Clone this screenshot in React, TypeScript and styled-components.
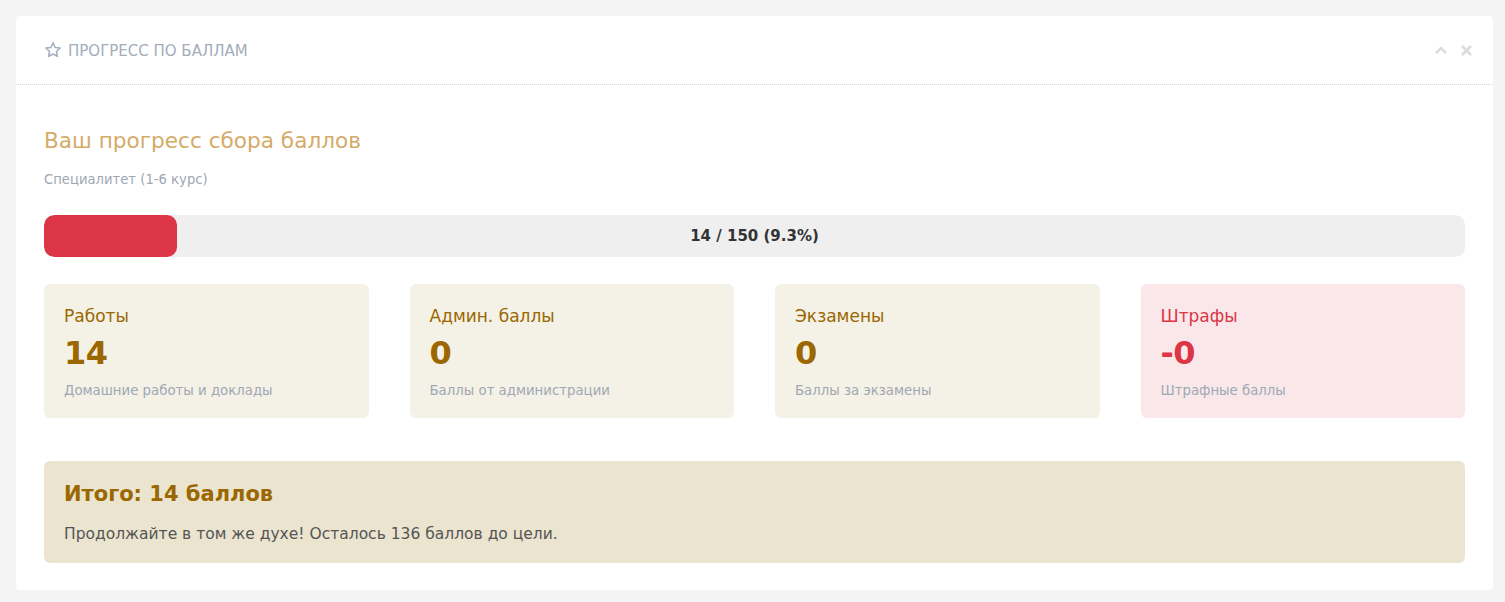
import React from 'react';
import styled, { createGlobalStyle } from 'styled-components';

const GlobalStyle = createGlobalStyle`
  html, body {
    margin: 0;
    padding: 0;
    background: #f4f4f4;
    font-family: "DejaVu Sans", Verdana, sans-serif;
  }
`;

type StatType = {
  title: string
  value: string
  note: string
  danger?: boolean
}

const stats: StatType[] = [
  { title: 'Работы', value: '14', note: 'Домашние работы и доклады' },
  { title: 'Админ. баллы', value: '0', note: 'Баллы от администрации' },
  { title: 'Экзамены', value: '0', note: 'Баллы за экзамены' },
  { title: 'Штрафы', value: '-0', note: 'Штрафные баллы', danger: true },
];

const App: React.FC = () => {
  const current = 14;
  const goal = 150;
  const percent = (current / goal) * 100;
  return (
    <>
      <GlobalStyle />
      <Page>
        <Card>
          <Header>
            <HeaderTitle>
              <svg width="18" height="18" viewBox="0 0 24 24" fill="none" stroke="#a3adbb" strokeWidth="2" strokeLinejoin="round">
                <path d="M12 2.5l2.9 6.1 6.6.8-4.9 4.6 1.3 6.6L12 17.3l-5.9 3.3 1.3-6.6-4.9-4.6 6.6-.8z" />
              </svg>
              <span>ПРОГРЕСС ПО БАЛЛАМ</span>
            </HeaderTitle>
            <Tools>
              <svg width="14" height="14" viewBox="0 0 14 14" fill="none" stroke="#dcdcdc" strokeWidth="2.6">
                <path d="M2 10l5-5 5 5" />
              </svg>
              <svg width="13" height="13" viewBox="0 0 13 13" fill="none" stroke="#dcdcdc" strokeWidth="2.6">
                <path d="M2 2l9 9M11 2l-9 9" />
              </svg>
            </Tools>
          </Header>
          <Body>
            <Heading>Ваш прогресс сбора баллов</Heading>
            <Sub>Специалитет (1-6 курс)</Sub>
            <Bar>
              <Fill style={{ width: `${percent}%` }} />
              <BarLabel>{current} / {goal} ({percent.toFixed(1)}%)</BarLabel>
            </Bar>
            <Grid>
              {stats.map((s) => (
                <Stat key={s.title} $danger={s.danger}>
                  <StatTitle $danger={s.danger}>{s.title}</StatTitle>
                  <StatValue $danger={s.danger}>{s.value}</StatValue>
                  <StatNote>{s.note}</StatNote>
                </Stat>
              ))}
            </Grid>
            <Total>
              <TotalTitle>Итого: {current} баллов</TotalTitle>
              <TotalText>Продолжайте в том же духе! Осталось {goal - current} баллов до цели.</TotalText>
            </Total>
          </Body>
        </Card>
      </Page>
    </>
  );
};

const Page = styled.div`
  padding: 16px 12px 12px 16px;
`;
const Card = styled.div`
  background: #fff;
  border-radius: 4px;
  height: 574px;
  box-sizing: border-box;
`;
const Header = styled.div`
  height: 69px;
  box-sizing: border-box;
  border-bottom: 1px dotted #d6d6d6;
  display: flex;
  align-items: center;
  justify-content: space-between;
  padding: 0 20px 0 28px;
`;
const HeaderTitle = styled.div`
  display: flex;
  align-items: center;
  gap: 6px;
  color: #a3adbb;
  font-size: 15px;
  span { margin-top: 1px; }
`;
const Tools = styled.div`
  display: flex;
  align-items: center;
  gap: 12px;
`;
const Body = styled.div`
  padding: 40px 28px 27px;
`;
const Heading = styled.h2`
  margin: 0;
  font-weight: normal;
  font-size: 21.6px;
  color: #d5ab68;
  line-height: 32px;
`;
const Sub = styled.div`
  margin-top: 15px;
  font-size: 13.2px;
  color: #9ea7b4;
`;
const Bar = styled.div`
  position: relative;
  margin-top: 28px;
  height: 42px;
  background: #efefef;
  border-radius: 10px;
  overflow: hidden;
`;
const Fill = styled.div`
  height: 100%;
  background: #dc3545;
  border-radius: 10px;
`;
const BarLabel = styled.div`
  position: absolute;
  inset: 0;
  display: flex;
  align-items: center;
  justify-content: center;
  font-weight: bold;
  font-size: 15px;
  color: #333;
`;
const Grid = styled.div`
  display: grid;
  grid-template-columns: repeat(4, 1fr);
  gap: 41px;
  margin-top: 27px;
`;
const Stat = styled.div<{ $danger?: boolean }>`
  background: ${(p) => (p.$danger ? '#f9e7e9' : '#f4f1e6')};
  border-radius: 6px;
  height: 134px;
  box-sizing: border-box;
  padding: 20px 20px;
`;
const StatTitle = styled.div<{ $danger?: boolean }>`
  font-size: 17px;
  color: ${(p) => (p.$danger ? '#dc3545' : '#9a6700')};
  line-height: 24px;
`;
const StatValue = styled.div<{ $danger?: boolean }>`
  font-size: 32px;
  font-weight: bold;
  color: ${(p) => (p.$danger ? '#dc3545' : '#9a6700')};
  line-height: 40px;
  margin-top: 5px;
  letter-spacing: -0.5px;
`;
const StatNote = styled.div`
  font-size: 13.3px;
  color: #a0a8b5;
  margin-top: 10px;
`;
const Total = styled.div`
  margin-top: 43px;
  background: #ebe4cf;
  border-radius: 6px;
  height: 102px;
  box-sizing: border-box;
  padding: 19px 20px;
`;
const TotalTitle = styled.div`
  font-size: 21px;
  font-weight: bold;
  color: #9a6700;
  line-height: 28px;
`;
const TotalText = styled.div`
  margin-top: 17px;
  font-size: 15.5px;
  color: #555;
`;

export default App;
